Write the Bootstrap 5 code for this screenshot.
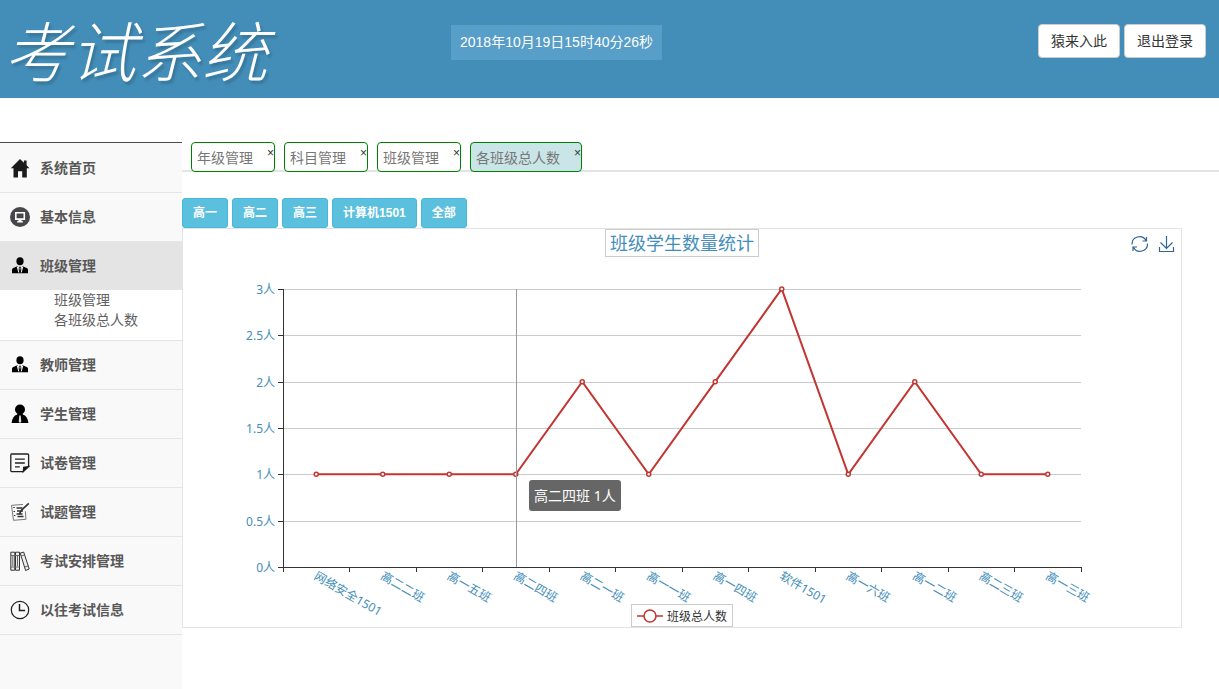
<!DOCTYPE html>
<html lang="zh-CN">
<head>
<meta charset="utf-8">
<meta name="viewport" content="width=device-width, initial-scale=1">
<title>考试系统</title>
<link href="https://cdn.jsdelivr.net/npm/bootstrap@5.3.0/dist/css/bootstrap.min.css" rel="stylesheet">
<style>
body{font-family:"Liberation Sans","Noto Sans CJK SC",sans-serif;font-size:14px;line-height:20px;color:#393939;background:#fff}
a{text-decoration:none}
.topbar{background:#438eb9;height:98px}
.brand-col{width:37%}
.logo{font-family:"Noto Sans CJK SC",sans-serif;font-size:66px;line-height:96px;font-weight:300;font-style:italic;color:#fff;text-shadow:2px 3px 3px rgba(0,0,0,.2)}
.clock{background:#579ec8;color:#fff;padding:7px 9px 8px;margin-top:25px}
.btn-top{--bs-btn-bg:#fff;--bs-btn-border-color:#ccc;--bs-btn-color:#333;font-size:14px;line-height:20px;padding:6px 12px;border-radius:4px}
.top-actions{padding:24px 13px 0 0}
.page-body{margin-top:44px}
.sidebar{width:182px;background:#f9f9f9;border-top:1px solid #4b4b50}
.side-link{display:flex;align-items:center;gap:10px;height:48px;padding-left:10px;color:#585858;font-weight:700}
.side-link svg{width:20px;height:20px;flex:none}
.side-item{border-bottom:1px solid #e5e5e5}
.side-item:first-child .side-link{height:49px}
.side-item.current .side-link{background:#e4e4e4}
.submenu{background:#fff;padding:0 0 10px 54px}
.submenu a{color:#616161;display:block}
.tabs{border-bottom:2px solid #e4e4e4;padding-left:9px;gap:9px;height:30px}
.tab{height:30px;border:1px solid #008000;border-radius:4px;background:#fff;padding:1px 0 0 5px}
.tab.open{background:#cae5e8}
.tab a{color:#777;line-height:28px}
.tab button{border:0;background:none;padding:0;color:#333;font-size:12px;line-height:18px;margin-left:14px}
.filters{gap:4px;margin-top:26px}
.btn-grade{--bs-btn-bg:#5bc0de;--bs-btn-border-color:#46b8da;--bs-btn-color:#fff;--bs-btn-hover-bg:#31b0d5;--bs-btn-hover-color:#fff;font-size:12px;line-height:18px;font-weight:700;padding:5px 10px;border-radius:3px}
.chart-box{max-width:1000px;border:1px solid #e4e4e4}
.chart{width:100%;height:auto;font-family:"Noto Sans","Noto Sans CJK SC",sans-serif;font-size:12px;fill:#438eb9}
.toolbox{top:6px;right:5px;gap:8px}
.toolbox button{border:0;background:none;padding:0;width:19px;height:18px}
.toolbox svg{display:block}
</style>
</head>
<body class="d-flex flex-column min-vh-100">
<header class="topbar d-flex align-items-start">
  <div class="brand-col"><h1 class="logo m-0 ps-1 text-nowrap">考试系统</h1></div>
  <div class="clock text-nowrap">2018年10月19日15时40分26秒</div>
  <div class="top-actions d-flex gap-1 ms-auto">
    <button type="button" class="btn btn-top">猿来入此</button>
    <button type="button" class="btn btn-top">退出登录</button>
  </div>
</header>
<div class="page-body d-flex flex-grow-1">
  <nav class="sidebar flex-shrink-0" aria-label="主菜单">
    <ul class="list-unstyled m-0">
      <li class="side-item"><a class="side-link" href="#"><svg viewBox="0 0 20 20" fill="#1b1b1b"><path d="M10 1 0.8 10.2H3.5V19.5H8V13.3h4.2v6.2h4.6V10.2h2.6L16.6 7.3V2.5h-2.7v2.2z"/></svg>系统首页</a></li>
      <li class="side-item"><a class="side-link" href="#"><svg viewBox="0 0 20 20"><circle cx="10" cy="10" r="10" fill="#47474b"/><path d="M5.8 5.7h8.5v6.4H5.8zM7.2 14.8h5.6M8.5 13.5h3" fill="none" stroke="#fff" stroke-width="1.6"/></svg>基本信息</a></li>
      <li class="side-item current"><a class="side-link" href="#"><svg viewBox="0 0 20 20"><use href="#person"/></svg>班级管理</a>
        <div class="submenu"><a href="#">班级管理</a><a href="#">各班级总人数</a></div></li>
      <li class="side-item"><a class="side-link" href="#"><svg viewBox="0 0 20 20"><g id="person"><ellipse cx="10" cy="5.3" rx="3.6" ry="4"/><path d="M2 17.2V13.6Q2.2 12 4.5 11.4L7.6 10 9 15 9.5 12.2 9 10.8h2l-.5 1.4.5 2.8 1.4-5 3.1 1.4Q17.8 12 18 13.6v3.6z"/><path d="m7.2 10.5 1.6 6M12.8 10.5l-1.6 6" stroke="#fff"/></g></svg>教师管理</a></li>
      <li class="side-item"><a class="side-link" href="#"><svg viewBox="0 0 20 20"><circle cx="10" cy="5.5" r="5"/><path d="M7.5 8h5l.3 2.4q4.7 1 5.6 8.6H1.6q.9-7.6 5.6-8.6z"/><path d="m9.3 11.5-.6 6.2 1.3 1.3 1.3-1.3-.6-6.2z" fill="#ddd"/></svg>学生管理</a></li>
      <li class="side-item"><a class="side-link" href="#"><svg viewBox="0 0 20 20" fill="none" stroke="#222" stroke-width="1.3"><path d="M13.3 18.6H1.6Q.8 18.6.8 17.8V1.9Q.8 1 1.6 1h16q1 0 1 .9v11.5M5 6.2h9.8M5 10h9.8M5 13.8h4.8"/><path d="m13.3 18.6.4-4.4 5-.7z" fill="#111"/></svg>试卷管理</a></li>
      <li class="side-item"><a class="side-link" href="#"><svg viewBox="0 0 20 20" fill="none" stroke="#333"><path d="m13 2.5-11.5.8 2 15 12.4-1-.5-8" stroke="#777"/><path d="M6.5 6h6M7 9h6M6.5 12h6M7.5 14.5h6" stroke-width="1.5"/><path d="m18.8 1.3-7.2 6.8-2.3 4.1" stroke-width="1.6"/><path d="M4 5v1m.3 3v1m.4 3v1" stroke-width="1.5"/></svg>试题管理</a></li>
      <li class="side-item"><a class="side-link" href="#"><svg viewBox="0 0 20 20" fill="#eee" stroke="#333"><path d="M.8 1.2h4v18h-4zM5.5 1.2h4v18h-4zM10.2 2.1l3.5-1L19.2 18l-3.6 1.5z"/><path d="M1 4.5h8.5M1 16h8.5M11 5l3.5-1M14.8 16l3.6-1.2M2.8 5v10M7.5 5v10" stroke="#666"/></svg>考试安排管理</a></li>
      <li class="side-item"><a class="side-link" href="#"><svg viewBox="0 0 20 20" fill="none" stroke="#222" stroke-width="1.2"><circle cx="10" cy="10" r="8.7"/><path d="M9.5 4v6.6h5.6" stroke-width="1.5"/></svg>以往考试信息</a></li>
    </ul>
  </nav>
  <main class="flex-grow-1">
    <ul class="tabs list-unstyled d-flex m-0">
      <li class="tab d-flex align-items-start"><a href="#">年级管理</a><button type="button" aria-label="关闭年级管理">×</button></li>
      <li class="tab d-flex align-items-start"><a href="#">科目管理</a><button type="button" aria-label="关闭科目管理">×</button></li>
      <li class="tab d-flex align-items-start"><a href="#">班级管理</a><button type="button" aria-label="关闭班级管理">×</button></li>
      <li class="tab open d-flex align-items-start"><a href="#">各班级总人数</a><button type="button" aria-label="关闭各班级总人数">×</button></li>
    </ul>
    <div class="filters d-flex">
      <button type="button" class="btn btn-grade">高一</button>
      <button type="button" class="btn btn-grade">高二</button>
      <button type="button" class="btn btn-grade">高三</button>
      <button type="button" class="btn btn-grade">计算机1501</button>
      <button type="button" class="btn btn-grade">全部</button>
    </div>
    <section class="chart-box position-relative">
      <svg class="chart d-block" id="chart" viewBox="0 0 998 398" role="img" aria-label="班级学生数量统计">
        <g id="plot"></g>
        <rect x="422.5" y="0.5" width="153" height="27" fill="#fff" stroke="#ccc"/>
        <text x="427" y="21" font-size="18">班级学生数量统计</text>
        <g><rect x="448.5" y="375.5" width="101" height="22" fill="#fff" stroke="#ccc"/>
          <path d="M454 387h26" stroke="#c23531" stroke-width="1.5"/><circle cx="467" cy="387" r="6" fill="#fff" stroke="#c23531" stroke-width="1.5"/>
          <text x="484" y="392" fill="#333">班级总人数</text></g>
        <g><rect x="346" y="251" width="92" height="31" rx="3" fill="#666"/><text x="351" y="272" font-size="14" fill="#fff">高二四班 1人</text></g>
      </svg>
      <div class="toolbox position-absolute d-flex">
        <button type="button" aria-label="还原"><svg width="19" height="18" fill="none" stroke="#2f6496" stroke-width="1.2"><path d="M2 9.500A7.500 7.500 0 0 1 16 5.500M17.500 8.500A7.500 7.500 0 0 1 3.500 12.500M16.500 2V6H12.500M3 16V12H7"/></svg></button>
        <button type="button" aria-label="保存为图片"><svg width="19" height="18" fill="none" stroke="#2f6496" stroke-width="1.2"><path d="M9.500 1v12M3.500 7.500l6 6 6-6M2.500 12v4.500h14V12"/></svg></button>
      </div>
    </section>
  </main>
</div>
<script src="https://cdn.jsdelivr.net/npm/bootstrap@5.3.0/dist/js/bootstrap.bundle.min.js"></script>
<script>
const data = [["网络安全1501",1],["高二二班",1],["高一五班",1],["高二四班",1],["高二一班",2],["高一一班",1],
  ["高一四班",2],["软件1501",3],["高一六班",1],["高一二班",2],["高二三班",1],["高一三班",1]];
const left = 100, right = 898, top0 = 60, bottom = 338;
const step = (right - left) / data.length;
const snap = v => Math.ceil(v - 0.5) + 0.5;
const yOf = v => bottom - v / 3 * (bottom - top0);
const line = (x1, y1, x2, y2, c) => `<path d="M${x1} ${y1}L${x2} ${y2}" stroke="${c}"/>`;
let out = "";
for (let v = 0; v <= 3; v += 0.5) {
  const y = snap(yOf(v));
  if (v) out += line(left, y, right, y, "#ccc");
  out += line(left - 5, y, left, y, "#333");
  out += `<text x="${left - 8}" y="${y + 4}" text-anchor="end">${v}人</text>`;
}
out += line(left + 0.5, top0, left + 0.5, bottom + 1, "#333") + line(left, bottom + 0.5, right + 1, bottom + 0.5, "#333");
for (let i = 0; i <= data.length; i++) {
  const x = snap(left + i * step);
  out += line(x, bottom, x, bottom + 5, "#333");
}
const pts = data.map((d, i) => [left + (i + 0.5) * step, yOf(d[1])]);
out += `<polyline points="${pts.join(" ")}" fill="none" stroke="#c23531" stroke-width="2"/>`;
pts.forEach(([x, y], i) => {
  out += `<circle cx="${x}" cy="${y}" r="2" fill="#fff" stroke="#c23531" stroke-width="1.5"/>`;
  out += `<text transform="translate(${x - 1} ${bottom + 8}) rotate(30)" y="4">${data[i][0]}</text>`;
});
out += line(snap(pts[3][0]), top0, snap(pts[3][0]), bottom, "#999");
document.getElementById("plot").innerHTML = out;
</script>
</body>
</html>
